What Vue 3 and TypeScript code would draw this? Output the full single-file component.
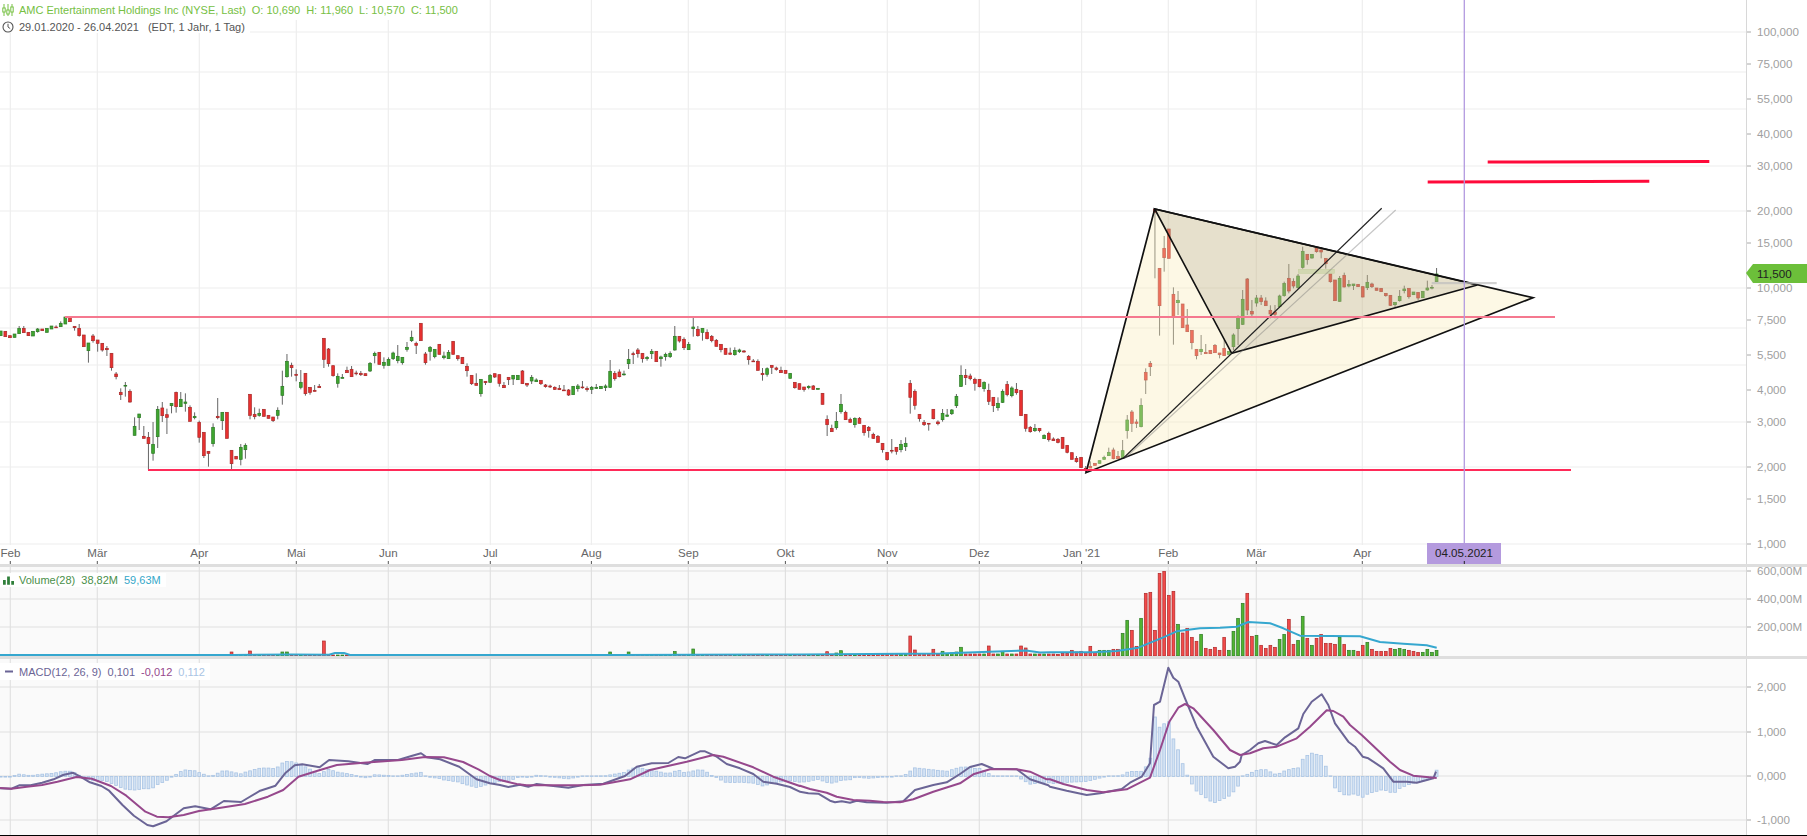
<template>
  <div class="chart">
    <!-- price pane -->
    <section class="pane pane-main">
      <svg class="plot" viewBox="0 0 1807 564" width="1807" height="564">
        <line v-for="y in mainGridY" :key="y" class="grid" x1="0" x2="1746" :y1="y" :y2="y" />
        <line v-for="m in months" :key="m.label" class="grid" :x1="m.x" :x2="m.x" y1="0" y2="545" />

        <g v-for="(c, i) in candles" :key="i">
          <line class="wick" :x1="xAt(i)" :x2="xAt(i)" :y1="c.high" :y2="c.low" />
          <rect
            :class="c.up ? 'body-up' : 'body-down'"
            :x="xAt(i) - 1.4"
            :y="c.top"
            width="2.8"
            :height="Math.max(c.bottom - c.top, 0.8)"
          />
        </g>

        <!-- drawings -->
        <polygon class="tri-outer" points="1086,472.7 1154.7,209 1533,297.7" />
        <polygon class="tri-inner" points="1154.7,209 1231.7,353.3 1477.3,285" />
        <rect class="note-green" x="1298.3" y="269.3" width="36" height="4" />
        <rect class="note-grey" x="1431.7" y="282" width="65" height="2.2" />
        <line class="fan-grey" x1="1125" y1="458.3" x2="1395.7" y2="210" />
        <line class="fan-black" x1="1123.3" y1="458.3" x2="1381.7" y2="208.3" />
        <line class="level-soft" x1="65" x2="1555" y1="317" y2="317" />
        <line class="level-hard" x1="148" x2="1571" y1="470" y2="470" />
        <line class="target" x1="1487.7" y1="162" x2="1709.3" y2="161.5" />
        <line class="target" x1="1427.7" y1="182" x2="1649.3" y2="181.3" />
        <line class="cursor" x1="1464.3" x2="1464.3" y1="0" y2="545" />

        <!-- time axis -->
        <g v-for="m in months" :key="'t' + m.label">
          <line class="time-tick" :x1="m.x" :x2="m.x" y1="561" y2="564" />
          <text class="time-label" :x="m.labelX" y="557">{{ m.label }}</text>
        </g>
        <rect class="cursor-tag" x="1427" y="543" width="74" height="21" />
        <text class="cursor-text" x="1464" y="557">04.05.2021</text>
        <line class="cursor-tick" x1="1464.3" x2="1464.3" y1="561" y2="564" />

        <!-- price axis -->
        <line class="axis" x1="1746.5" x2="1746.5" y1="0" y2="564" />
        <g v-for="t in priceTicks" :key="t.label">
          <line class="axis-tick" x1="1747" x2="1751" :y1="t.y" :y2="t.y" />
          <text class="axis-label" x="1757" :y="t.y + 4">{{ t.label }}</text>
        </g>
        <polygon class="price-tag" points="1746,273 1753,264 1807,264 1807,283 1753,283" />
        <text class="price-text" x="1757" y="277.5">11,500</text>
      </svg>

      <div class="legend">
        <div class="legend-row title-row">
          <svg class="legend-icon" viewBox="0 0 12 12" width="12" height="12">
            <path d="M2 0v12M6 0v12M10 0v12" stroke="#76c043" stroke-width="1" fill="none" />
            <rect x="0.8" y="4" width="2.4" height="4" fill="#fff" stroke="#76c043" />
            <rect x="4.8" y="6" width="2.4" height="4" fill="#fff" stroke="#76c043" />
            <rect x="8.8" y="3" width="2.4" height="5" fill="#fff" stroke="#76c043" />
          </svg>
          <span>AMC Entertainment Holdings Inc (NYSE, Last)</span>
          <span v-for="s in ohlc" :key="s" class="stat">{{ s }}</span>
        </div>
        <div class="legend-row range-row">
          <svg class="legend-icon" viewBox="0 0 12 12" width="12" height="12">
            <circle cx="6" cy="6" r="5" fill="none" stroke="#555" stroke-width="1.1" />
            <path d="M6 2.8V6l2.2 1.6" fill="none" stroke="#555" stroke-width="1" />
          </svg>
          <span>29.01.2020 - 26.04.2021</span>
          <span class="range-meta">(EDT, 1 Jahr, 1 Tag)</span>
        </div>
      </div>
    </section>

    <!-- volume pane -->
    <section class="pane pane-volume">
      <svg class="plot" viewBox="0 567 1807 89" width="1807" height="89">
        <rect class="pane-bg" x="0" y="567" width="1746" height="89" />
        <line v-for="y in [571, 599, 627]" :key="y" class="grid-low" x1="0" x2="1746" :y1="y" :y2="y" />
        <line v-for="m in months" :key="m.label" class="grid-low" :x1="m.x" :x2="m.x" y1="567" y2="656" />
        <rect
          v-for="(b, i) in volumeBars"
          :key="i"
          :class="b.up ? 'vol-up' : 'vol-down'"
          :x="xAt(i) - 1.4"
          :y="b.top"
          width="2.8"
          :height="656 - b.top"
        />
        <polyline class="vol-avg" :points="volumeAvg" />
        <line class="axis" x1="1746.5" x2="1746.5" y1="567" y2="656" />
        <g v-for="t in volumeTicks" :key="t.label">
          <line class="axis-tick" x1="1747" x2="1751" :y1="t.y" :y2="t.y" />
          <text class="axis-label" x="1757" :y="t.y + 4">{{ t.label }}</text>
        </g>
      </svg>
      <div class="legend legend-volume">
        <div class="legend-row">
          <svg class="legend-icon" viewBox="0 0 12 9" width="12" height="9">
            <path d="M0 4h3v5H0zM4.5 0h3v9h-3zM9 5h3v4H9z" fill="#2f7f3a" />
          </svg>
          <span class="vol-name">Volume(28)</span>
          <span class="vol-name stat">38,82M</span>
          <span class="vol-ma stat">59,63M</span>
        </div>
      </div>
    </section>

    <!-- macd pane -->
    <section class="pane pane-macd">
      <svg class="plot" viewBox="0 659 1807 176" width="1807" height="176">
        <rect class="pane-bg" x="0" y="659" width="1746" height="176" />
        <line v-for="y in [687, 732, 776, 820]" :key="y" class="grid-low" x1="0" x2="1746" :y1="y" :y2="y" />
        <line v-for="m in months" :key="m.label" class="grid-low" :x1="m.x" :x2="m.x" y1="659" y2="835" />
        <rect
          v-for="(h, i) in histogram"
          :key="i"
          class="hist"
          :x="xAt(i) - 1.4"
          :y="h.y"
          width="2.8"
          :height="h.height"
        />
        <polyline class="macd-line" :points="toPoints(macdLine)" />
        <polyline class="signal-line" :points="toPoints(signalLine)" />
        <line class="axis" x1="1746.5" x2="1746.5" y1="659" y2="835" />
        <g v-for="t in macdTicks" :key="t.label">
          <line class="axis-tick" x1="1747" x2="1751" :y1="t.y" :y2="t.y" />
          <text class="axis-label" x="1757" :y="t.y + 4">{{ t.label }}</text>
        </g>
      </svg>
      <div class="legend legend-macd">
        <div class="legend-row">
          <svg class="legend-icon" viewBox="0 0 12 3" width="9" height="3">
            <rect width="12" height="3" fill="#6b6596" />
          </svg>
          <span class="macd-name">MACD(12, 26, 9)</span>
          <span class="macd-name stat">0,101</span>
          <span class="signal-name stat">-0,012</span>
          <span class="hist-name stat">0,112</span>
        </div>
      </div>
    </section>
  </div>
</template>

<script setup lang="ts">
interface Candle {
  up: boolean;
  top: number;
  bottom: number;
  high: number;
  low: number;
}

type Point = [number, number];

const FIRST_X = 0.7;
const STEP = 4.617;
const xAt = (i: number) => FIRST_X + i * STEP;

// values below were traced at 3x, tokens are <color><top>/<bottom>[/<high>/<low>]
function trace(baseY: number, raw: string): Candle[] {
  return raw
    .trim()
    .split(/\s+/)
    .map((token) => {
      const [t, b, h, l] = token.slice(1).split('/').map(Number);
      return {
        up: token[0] === 'g',
        top: baseY + t / 3,
        bottom: baseY + b / 3,
        high: baseY + (h ?? t) / 3,
        low: baseY + (l ?? b) / 3,
      };
    });
}

const candles: Candle[] = [
  ...trace(300, `
    g93/107 r94/110 r107/113 g102/112 g85/101/78/101 r85/98/78/98 r97/107 g94/108 g87/95/84/98 r87/92 g85/97 g78/87
    r81/83/76/83 g70/80/64/80 g51/72 r52/65 r79/83/79/92 r85/107/72/110 r105/140 g129/152/129/188 r108/122/102/128
    r120/130/120/155 r130/150/130/155 r145/149/138/168 r160/203/160/212 r222/230/216/238 r277/284/265/300
    g256/258/246/290 r274/306/268/308 g379/406/352/406 g342/353/342/390 r409/415/378/415 r412/431/396/510
    g433/460/366/482 g328/410/318/444 r324/347/306/366 r344/352/326/402 g310/317/310/340 r277/320/275/338
    g298/320/276/320 g306/310/280/335 r322/364/316/364 g349/353/337/358 r367/412/362/428 r397/467/397/474
    r454/460/454/500 g382/431/370/440 r349/353/294/358 g337/362/337/390 r337/415 r451/491/451/510 r469/477
    g442/478/432/496 g436/449/430/476 r283/346/283/358 r343/350/322/358 g340/346/326/350 r328/349 r346/355
    r351/362/351/366 g331/346/322/358 g259/286/212/314 g184/230/162/233 r196/203/188/230 r223/226/208/244
    g247/262/210/268 r220/281/220/287 r262/277/262/284 r271/274/255/274 r259/263/252/263 r115/178/115/204
    r147/191/144/200 r197/227/197/230 g229/250/220/263 g232/235/222/235 r211/218/200/218 r208/230/198/230
    r219/221/212/226 r220/224/213/228 r221/227 g190/213/186/216 g160/167/155/190 r157/193 g187/196/172/206
    g178/196/172/196 g159/176/155/180 g169/182/135/190 g172/188/172/194 g142/148/126/155 g112/122/92/126
    r130/136/125/162 r70/122 r162/188/156/194 g142/154/138/182 g148/170/148/175 r133/163 g168/173/155/178
    g157/176/150/176 r124/163 r167/176/167/182 r172/191 r199/212/190/230 r226/251/226/255 r250/256/220/256
    g238/281/238/290 r244/248/244/255 g226/247/222/248 r221/231/221/234 r224/250/224/260
  `),
  ...trace(310, `
    r226/233/216/234 r202/209/202/225 g196/207/196/225 g196/209 r183/221/180/221 r220/225/220/231 g202/213/195/222
    g210/215/205/215 r211/221/211/225 r225/230/222/233 r228/231/224/234 r232/238/229/240 r235/239/225/240
    r240/242/225/242 r240/255/237/258 g229/254 g228/236/222/245 r231/233/213/236 r235/239/229/245 g232/238/228/252
    g232/235/222/237 g229/236 g228/233/223/243 g184/232/150/234 r190/206/183/212 r186/200/178/202 g192/194/182/197
    g148/161/117/177 r131/134/125/162 r120/131/114/143 r130/146/130/158 g142/146/138/152 g124/131/117/147 r124/155
    g141/146/137/170 g133/140/128/152 g130/140/124/144 g79/120/48/122 r79/93/79/98 r88/113/82/120 g103/119/96/119
    g51/56/22/80 r58/77/48/80 g55/67/55/92 r67/86/58/88 r79/92/75/97 r91/109/87/109 r103/119/103/127 r115/133
    r129/133/113/133 g121/134/112/137 g120/125/116/129 r123/126/120/128 r139/149/135/164 r153/155/147/155
    r154/181/148/181 r190/194/174/212 g176/193/172/200 r166/172/166/192 r174/178/170/182 r181/188/170/188 r181/190
    g190/205 r217/233/217/236 r221/238
  `),
  ...trace(340, `
    r141/149/141/155 g139/143/136/148 r138/148/135/150 g145/148 r160/193 r238/254/226/288 r265/275/254/275
    g244/263/216/269 g193/215/162/221 r217/239/212/239 r238/247/233/247 g235/254/232/263 r235/250/231/250
    r256/278/256/287 r262/272/258/293 r283/295/278/297 r289/307/285/307 r310/329/310/338 r337/359/337/362
    r331/333/297/340 r322/334/322/344 g313/329/300/337 g310/320/292/333 r130/172/120/221 r154/196/148/209
    r223/236/223/245 r247/254/240/258 r250/252/250/272 r208/236/208/238 r246/251/241/256 g220/239/207/245
    g225/229/207/229 g210/221/207/225 g169/197/162/204 g106/139/76/141 r106/113/87/135 r108/116/101/121
    r118/130/113/152 r118/140/118/142 g127/146/124/155 r151/184/131/195 r172/197/172/216 g190/203/172/212
    g154/187/148/189 r133/164/123/169 g144/167/139/172 r148/158/129/164 r151/227 r223/265/223/275 r262/275/258/278
    g265/272/252/276 r265/272/265/277 g286/296/283/296 r280/299/275/305 r297/302/292/302 r298/307/294/310 r292/325
    r316/337/316/340 r338/358 r355/365/348/368 r352/383 r385/392/378/397 r379/384/364/384 r370/376 g362/370
  `),
  ...trace(190, `
    g802/808/797/808 g787/797/773/797 r780/806/773/808 r799/806/783/806 g782/805/750/805 g690/722/675/746
    r666/700/660/726 r696/700/688/714 g646/710/625/712 r547/570/535/612 r520/530/513/558 r58/68/58/265
    r235/347/235/437 r175/203/138/245 r117/205 r313/380/292/464 g331/338/303/375 r342/413 r405/425/357/425
    r421/458/421/478 r478/497/478/508 g478/485/435/495 r487/491/462/491 r481/491 r466/488/462/488 r489/494/489/505
    r475/497/450/497 g484/493 g435/470/430/480 g382/416/376/465 g328/403/300/405 r267/360/264/375 r364/372/330/383
    g324/339/315/350 r324/335/315/345 r333/347/322/347 r361/372/346/385 r366/373/345/385 g318/350/314/352
    g280/317/275/320 r265/303/222/310 r274/288/265/295 g258/293/252/296 g184/232/170/236 r193/209/193/224
    g193/204/193/206 r174/185/170/188 r180/186/172/205 r205/221/205/236 r252/275/252/278 r270/332 g265/334/258/335
    r256/291/248/292 g283/288/270/292 g282/287/282/300 r283/290 r290/321/290/322 g277/293/255/300 r282/290/278/294
    r294/301 r295/305 r310/317/310/320 r316/346/316/348 g337/344/337/352 g319/332/300/335 g297/302/287/310
    r295/320/295/326 g306/314 r307/324/307/330 g304/323 g294/300/272/302 g292/294/285/298 g252/275/234/276
  `),
];

const months = [
  { label: 'Feb', x: 10.3, labelX: 10.5 },
  { label: 'Mär', x: 97.3, labelX: 97.3 },
  { label: 'Apr', x: 199.3, labelX: 199.3 },
  { label: 'Mai', x: 296.3, labelX: 296.3 },
  { label: 'Jun', x: 388.3, labelX: 388.3 },
  { label: 'Jul', x: 490.3, labelX: 490.3 },
  { label: 'Aug', x: 591.4, labelX: 591.4 },
  { label: 'Sep', x: 688.3, labelX: 688.3 },
  { label: 'Okt', x: 785.4, labelX: 785.4 },
  { label: 'Nov', x: 887.3, labelX: 887.3 },
  { label: 'Dez', x: 979.3, labelX: 979.3 },
  { label: "Jan '21", x: 1081.6, labelX: 1081.6 },
  { label: 'Feb ', x: 1168.3, labelX: 1168.3 },
  { label: 'Mär ', x: 1256.3, labelX: 1256.3 },
  { label: 'Apr ', x: 1362.3, labelX: 1362.3 },
];

const mainGridY = [32, 72, 109, 166, 211, 288, 328, 365, 422, 467, 544];

const ohlc = ['O: 10,690', 'H: 11,960', 'L: 10,570', 'C: 11,500'];

const priceTicks = [
  { label: '100,000', y: 32 },
  { label: '75,000', y: 64 },
  { label: '55,000', y: 99 },
  { label: '40,000', y: 134 },
  { label: '30,000', y: 166 },
  { label: '20,000', y: 211 },
  { label: '15,000', y: 243 },
  { label: '10,000', y: 288 },
  { label: '7,500', y: 320 },
  { label: '5,500', y: 355 },
  { label: '4,000', y: 390 },
  { label: '3,000', y: 422 },
  { label: '2,000', y: 467 },
  { label: '1,500', y: 499 },
  { label: '1,000', y: 544 },
];

const volumeTicks = [
  { label: '600,00M', y: 571 },
  { label: '400,00M', y: 599 },
  { label: '200,00M', y: 627 },
];

const macdTicks = [
  { label: '2,000', y: 687 },
  { label: '1,000', y: 732 },
  { label: '0,000', y: 776 },
  { label: '-1,000', y: 820 },
];

// volume: only the bars that stand out are listed, the rest sit under the average line
const volumeSpikes: Record<number, number> = {
  50: 652, 54: 651, 61: 652, 62: 652, 70: 641, 132: 652, 136: 652, 146: 651.5, 150: 649,
  179: 651.7, 181: 653, 182: 650.7, 197: 636, 198: 650, 202: 649.3, 204: 651.3, 206: 653,
  207: 652, 208: 647.3, 214: 646, 217: 651.3, 221: 646, 222: 648,
};

const lastVolumes = `
  r312 r313 r310 r310 r301 r306 r304 r308 r289 r308 g301 g301 g301 r298 r298 g250 g211 r241 r289 g205
  r130 r127 r241 r70 r64 r136 r124 g223 r249 r235 r262 r274 g253 r295 r298 r292 r301 r262 g301 g244
  g205 g160 r130 r259 g256 r286 r295 r286 r292 g268 g253 r208 r283 g271 g199 r265 g286 r265 r253 r280
  r280 r283 g262 r283 g301 g301 r304 r286 g277 r298 r304 r304 r304 r295 g298 g295 g298 r301 r304 r307
  g307 g298 g307 g301
`.trim().split(/\s+/);

const volumeBars = candles.map((c, i) => {
  if (i >= 228) {
    const token = lastVolumes[i - 228];
    return { up: token[0] === 'g', top: 550 + Number(token.slice(1)) / 3 };
  }
  return { up: c.up, top: volumeSpikes[i] ?? (i < 190 ? 655 : 654) };
});

function crop(xBase: number, xScale: number, yBase: number, raw: string): Point[] {
  return raw
    .trim()
    .split(/\s+/)
    .map((pair) => {
      const [x, y] = pair.split(',').map(Number);
      return [xBase + x / xScale, yBase + y / 3] as Point;
    });
}

const toPoints = (pts: Point[]) => pts.map(([x, y]) => `${x.toFixed(1)},${y.toFixed(1)}`).join(' ');

const volumeAvg = toPoints([
  [0, 655], [232, 655], [290, 654.5], [329, 654.8], [335, 653], [344, 653], [350, 655],
  [620, 655], [800, 654.5], [940, 653.5], [1026, 650.5], [1040, 652.5],
  ...crop(1050, 3, 550, `
    0,307 130,307 200,303 265,293 340,262 380,244 450,235 510,233 560,230 595,216 660,220 700,235
    750,257 930,259 990,276 1060,281 1130,286 1160,293
  `),
]);

const macdLine: Point[] = [
  ...crop(0, 2.613, 550, `
    0,715 30,716 50,706 80,706 110,698 140,688 165,675 190,668 210,680 235,697 265,708 285,722 320,765 350,797
    385,825 400,829 435,814 480,775 510,769 550,778 585,753 630,756 680,722 720,707 745,670 770,646 790,643
    835,652 860,630 910,634 960,642 980,630 1040,630 1075,618 1100,610 1115,622 1150,628 1200,650 1245,688 1280,700
  `),
  ...crop(500, 3, 640, `
    0,435 25,441 60,434 85,440 110,432 160,438 205,443 250,435 310,431 375,408 410,380 455,370 505,369 535,351
    555,355 600,334 615,334 650,350 680,372 720,385 760,402 790,425 830,431 870,441 899,455
  `),
  ...crop(800, 3, 640, `
    0,455 25,460 55,461 90,482 105,487 125,484 150,488 170,482 200,487 260,488 310,484 345,450 400,435 440,427
    480,402 510,381 545,372 580,386 650,388 690,418 745,436
  `),
  ...crop(1050, 3, 550, `
    0,710 50,722 110,735 150,730 215,717 240,698 275,680 300,640 312,465 330,455 355,353 370,383 385,395 405,445
    440,530 490,620 535,655 555,650 570,635 575,615 600,600 625,580 645,573 680,585 705,562 745,535 760,492 785,455
    815,433 835,465 855,520 895,575 915,590 938,620 955,625 1000,655 1030,695 1070,695 1100,698 1150,685 1158,665
  `),
];

const signalLine: Point[] = [
  ...crop(0, 2.613, 550, `
    0,714 30,716 70,710 110,705 150,695 200,681 240,686 290,708 330,737 380,785 410,800 440,802 480,795 520,783
    560,776 640,762 700,740 740,720 780,680 830,662 880,645 950,638 1050,630 1110,621 1160,622 1210,636 1250,658 1280,678
  `),
  ...crop(500, 3, 640, `
    0,420 50,432 80,436 160,436 240,436 300,434 390,418 450,390 560,365 640,345 670,350 760,382 820,410 899,438
  `),
  ...crop(800, 3, 640, `
    0,437 30,447 80,458 110,470 160,480 210,482 250,486 300,487 340,478 400,455 480,430 520,403 570,388 650,388
    690,395 740,418
  `),
  ...crop(1050, 3, 550, `
    0,688 40,702 110,720 160,727 230,718 300,683 330,600 358,515 385,473 405,462 430,475 490,540 540,600 570,615
    600,610 640,595 680,590 740,565 780,530 830,481 850,483 880,500 900,525 935,555 1020,635 1050,660 1090,677 1160,684
  `),
];

function sample(pts: Point[], x: number): number {
  for (let i = 1; i < pts.length; i++) {
    if (x <= pts[i][0]) {
      const [x0, y0] = pts[i - 1];
      const [x1, y1] = pts[i];
      return y0 + ((y1 - y0) * (x - x0)) / (x1 - x0 || 1);
    }
  }
  return pts[pts.length - 1][1];
}

// histogram is macd minus signal on the same scale
const ZERO_Y = 776.5;
const histogram = candles.map((_, i) => {
  const diff = sample(signalLine, xAt(i)) - sample(macdLine, xAt(i));
  const height = Math.max(Math.abs(diff), 0.6);
  return { y: diff > 0 ? ZERO_Y - height : ZERO_Y, height };
});
</script>

<style scoped>
.chart {
  width: 1807px;
  height: 836px;
  display: flex;
  flex-direction: column;
  background: #dedede;
  font-family: "Liberation Sans", Arial, sans-serif;
  font-size: 11px;
  border-bottom: 1px solid #000;
  box-sizing: border-box;
  overflow: hidden;
}

.pane {
  position: relative;
  overflow: hidden;
  background: #fff;
}

.pane-main {
  height: 564px;
}

.pane-volume {
  height: 89px;
  margin-top: 3px;
}

.pane-macd {
  height: 176px;
  margin-top: 3px;
}

.plot {
  display: block;
}

.pane-bg {
  fill: #fafafa;
}

.grid {
  stroke: #eeeeee;
  stroke-width: 1.2;
}

.grid-low {
  stroke: #dfdfdf;
  stroke-width: 1.1;
}

.wick {
  stroke: #666;
  stroke-width: 1;
}

.body-up {
  fill: #3fa52f;
  stroke: #2b7a25;
  stroke-width: 0.7;
}

.body-down {
  fill: #e8302f;
  stroke: #a82a2a;
  stroke-width: 0.7;
}

.tri-outer {
  fill: rgba(250, 235, 180, 0.35);
  stroke: #111;
  stroke-width: 1.7;
}

.tri-inner {
  fill: rgba(100, 90, 60, 0.15);
  stroke: #111;
  stroke-width: 1.6;
}

.note-green {
  fill: rgba(190, 205, 150, 0.5);
  stroke: rgba(190, 205, 150, 0.8);
  stroke-width: 0.5;
}

.note-grey {
  fill: rgba(190, 190, 190, 0.7);
}

.fan-grey {
  stroke: rgba(110, 110, 110, 0.4);
  stroke-width: 1.2;
}

.fan-black {
  stroke: #222;
  stroke-width: 1.2;
}

.level-soft {
  stroke: #f5788f;
  stroke-width: 2;
}

.level-hard {
  stroke: #ff2a58;
  stroke-width: 1.8;
}

.target {
  stroke: #ff0a3a;
  stroke-width: 3;
}

.cursor {
  stroke: #b39ae0;
  stroke-width: 1.3;
}

.cursor-tag {
  fill: #b49ade;
}

.cursor-text {
  fill: #222;
  font-size: 11.6px;
  text-anchor: middle;
}

.cursor-tick {
  stroke: #222;
}

.time-tick {
  stroke: #555;
}

.time-label {
  fill: #666;
  font-size: 11.6px;
  text-anchor: middle;
}

.axis {
  stroke: #d8d8d8;
}

.axis-tick {
  stroke: #aaa;
}

.axis-label {
  fill: #a0a0a0;
  font-size: 11.6px;
}

.price-tag {
  fill: #6cbf3a;
}

.price-text {
  fill: #222;
  font-size: 11.6px;
}

.vol-up {
  fill: #52b432;
  stroke: #2b7a25;
  stroke-width: 0.7;
}

.vol-down {
  fill: #f24a4a;
  stroke: #ad2a2a;
  stroke-width: 0.7;
}

.vol-avg {
  fill: none;
  stroke: #35a7cf;
  stroke-width: 2;
  stroke-linejoin: round;
}

.hist {
  fill: #d3e2f3;
  stroke: #a9c4e4;
  stroke-width: 0.8;
}

.macd-line {
  fill: none;
  stroke: #6b6596;
  stroke-width: 2;
  stroke-linejoin: round;
}

.signal-line {
  fill: none;
  stroke: #96488c;
  stroke-width: 2;
  stroke-linejoin: round;
}

.legend {
  position: absolute;
  top: 0;
  left: 0;
  display: flex;
  flex-direction: column;
  align-items: flex-start;
}

.legend-volume {
  top: 6px;
}

.legend-macd {
  top: 4px;
}

.legend-row {
  display: flex;
  align-items: center;
  height: 14px;
  padding-right: 5px;
  background: #fff;
  white-space: nowrap;
}

.legend-icon {
  flex: none;
  margin: 0 5px 0 2px;
}

.legend-volume .legend-icon {
  margin: 0 5px 0 3px;
  width: 11px;
}

.legend-macd .legend-row {
  height: 17px;
}

.legend-macd .legend-icon {
  margin: 0 6px 0 5px;
  width: 8px;
}

.title-row {
  color: #76c043;
  height: 20px;
}

.range-row {
  color: #555;
  height: 13px;
}

.stat {
  margin-left: 6px;
}

.range-meta {
  margin-left: 9px;
}

.vol-name {
  color: #4a8f4a;
}

.vol-ma {
  color: #35a7c9;
}

.macd-name {
  color: #6b6596;
}

.signal-name {
  color: #96488c;
}

.hist-name {
  color: #a9c4e4;
}
</style>

<style>
html,
body {
  margin: 0;
  overflow: hidden;
}
</style>
